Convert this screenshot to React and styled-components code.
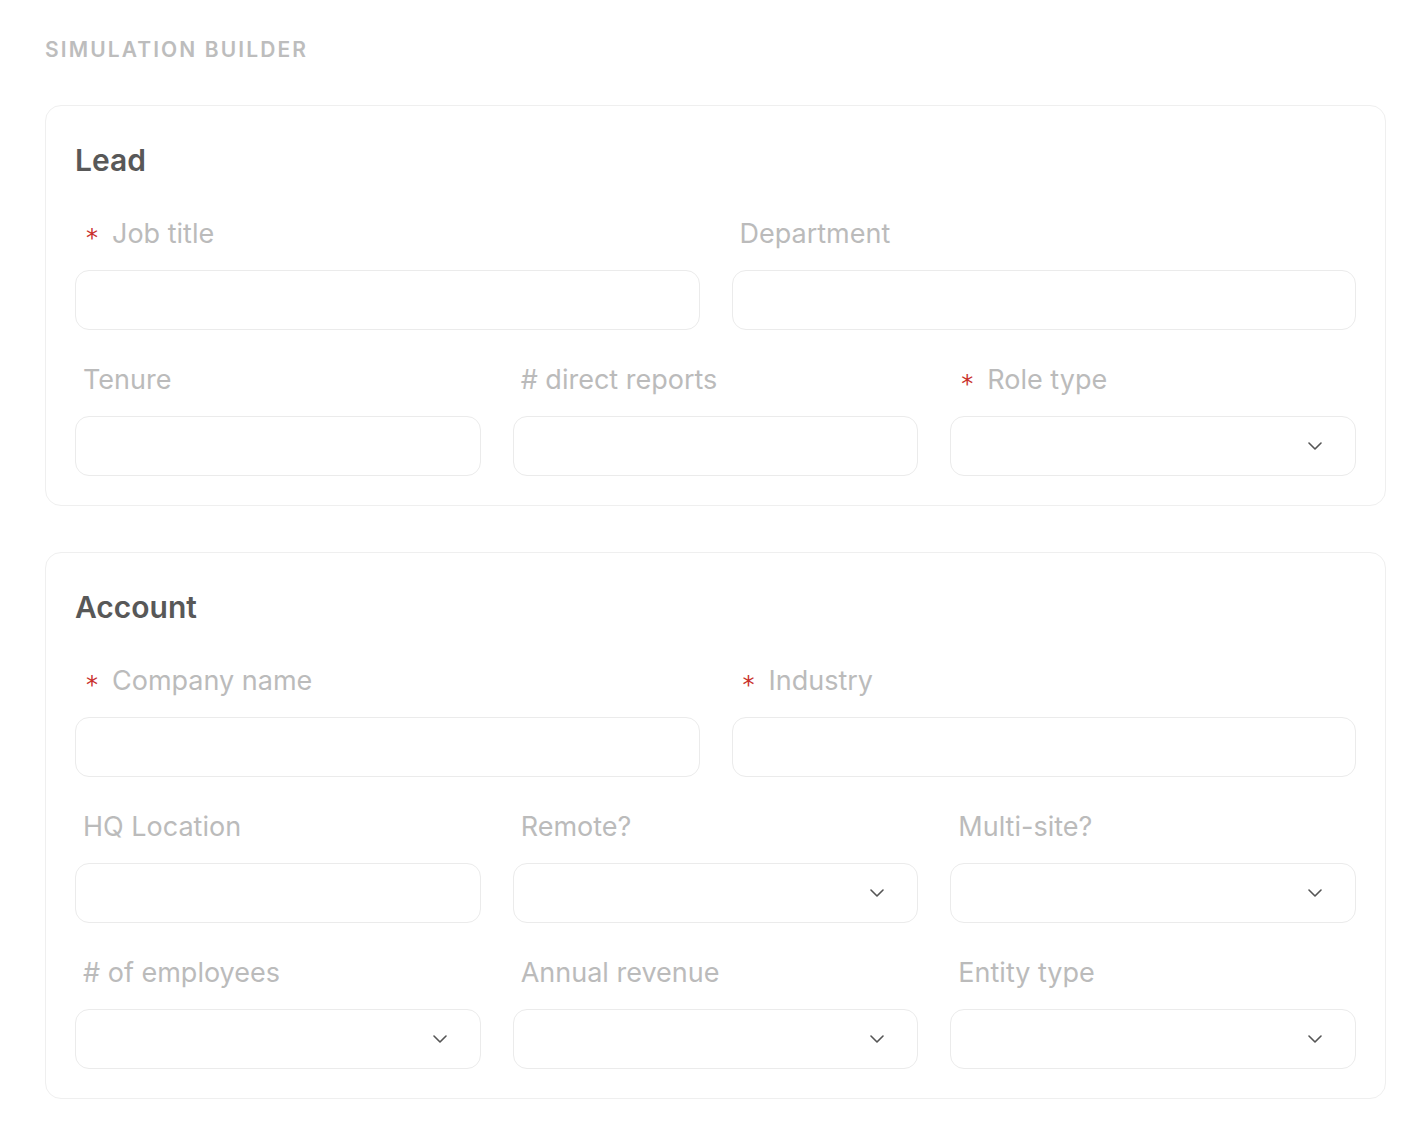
import React from 'react';
import styled, { createGlobalStyle } from 'styled-components';

const GlobalStyle = createGlobalStyle`
  body {
    margin: 0;
    background: #ffffff;
    font-family: Inter, "Noto Sans", sans-serif;
  }
  * {
    box-sizing: border-box;
  }
`;

const Page = styled.div`
  display: flex;
  flex-direction: column;
  gap: 43px;
  padding: 38px 39px 40px 45px;
`;

const PageTitle = styled.div`
  font-size: 21px;
  line-height: 24px;
  font-weight: 600;
  letter-spacing: 2.1px;
  text-transform: uppercase;
  color: #bdbdbd;
`;

const Sections = styled.div`
  display: flex;
  flex-direction: column;
  gap: 46px;
`;

const Card = styled.section`
  border: 1px solid #efefef;
  border-radius: 16px;
  padding: 36px 29px 29px;
  display: flex;
  flex-direction: column;
`;

const CardTitle = styled.h2`
  margin: 0 0 38px;
  font-size: 30px;
  line-height: 36px;
  font-weight: 600;
  color: #585858;
`;

const Rows = styled.div`
  display: flex;
  flex-direction: column;
  gap: 32px;
`;

const Row = styled.div`
  display: grid;
  grid-template-columns: repeat(${(props) => props.cols}, 1fr);
  column-gap: 32px;
`;

const Field = styled.div`
  display: flex;
  flex-direction: column;
  gap: 20px;
`;

const Label = styled.label`
  display: flex;
  align-items: center;
  padding: 2px 0 0 8px;
  font-size: 27px;
  line-height: 32px;
  font-weight: 400;
  color: #bbbbbb;
`;

const Required = styled.span`
  font-family: "DejaVu Sans", sans-serif;
  font-size: 24px;
  line-height: 1;
  color: #c9302c;
  margin: 0 14px 0 3px;
  transform: translateY(4px);
`;

const TextInput = styled.input`
  height: 60px;
  width: 100%;
  border: 1px solid #ebebeb;
  border-radius: 14px;
  padding: 0 18px;
  font-family: inherit;
  font-size: 22px;
  color: #444444;
  background: #ffffff;
  outline: none;
`;

const Select = styled.div`
  height: 60px;
  border: 1px solid #ebebeb;
  border-radius: 14px;
  display: flex;
  align-items: center;
  justify-content: flex-end;
  padding-right: 33px;
  background: #ffffff;
  cursor: pointer;
`;

const Chevron = () => (
  <svg width="14" height="8" viewBox="0 0 14 8" fill="none">
    <path d="M1 1L7 7L13 1" stroke="#555555" strokeWidth="1.6" strokeLinecap="round" strokeLinejoin="round" />
  </svg>
);

const FormField = ({ label, required, select }) => (
  <Field>
    <Label>
      {required && <Required>*</Required>}
      {label}
    </Label>
    {select ? (
      <Select>
        <Chevron />
      </Select>
    ) : (
      <TextInput type="text" />
    )}
  </Field>
);

const sections = [
  {
    title: 'Lead',
    rows: [
      [
        { label: 'Job title', required: true },
        { label: 'Department' },
      ],
      [
        { label: 'Tenure' },
        { label: '# direct reports' },
        { label: 'Role type', required: true, select: true },
      ],
    ],
  },
  {
    title: 'Account',
    rows: [
      [
        { label: 'Company name', required: true },
        { label: 'Industry', required: true },
      ],
      [
        { label: 'HQ Location' },
        { label: 'Remote?', select: true },
        { label: 'Multi-site?', select: true },
      ],
      [
        { label: '# of employees', select: true },
        { label: 'Annual revenue', select: true },
        { label: 'Entity type', select: true },
      ],
    ],
  },
];

export default function App() {
  return (
    <>
      <GlobalStyle />
      <Page>
        <PageTitle>Simulation Builder</PageTitle>
        <Sections>
          {sections.map((section) => (
            <Card key={section.title}>
              <CardTitle>{section.title}</CardTitle>
              <Rows>
                {section.rows.map((row, i) => (
                  <Row key={i} cols={row.length}>
                    {row.map((f) => (
                      <FormField key={f.label} {...f} />
                    ))}
                  </Row>
                ))}
              </Rows>
            </Card>
          ))}
        </Sections>
      </Page>
    </>
  );
}
